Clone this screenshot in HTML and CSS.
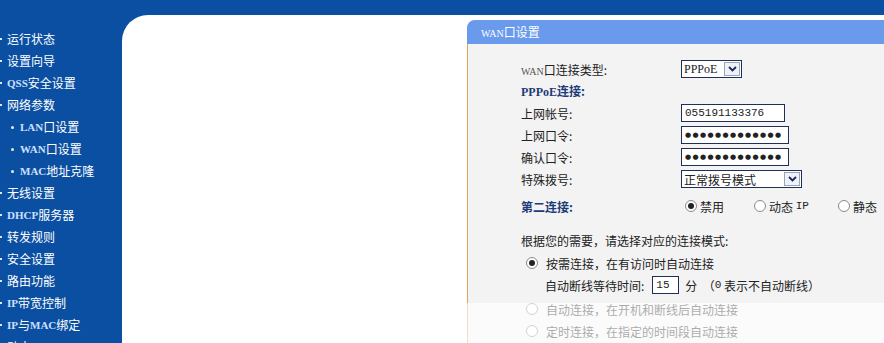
FILE: index.html
```html
<!DOCTYPE html>
<html lang="zh-CN">
<head>
    <meta charset="UTF-8">
    <title>WAN口设置</title>
    <link rel="stylesheet" href="styles.css">
</head>
<body>

    <div class="topbar"></div>

    <div class="layout">
        <!-- menu di sinistra -->
        <ul class="menu">
            <li><span class="dot"></span>运行状态</li>
            <li><span class="dot"></span>设置向导</li>
            <li><span class="dot"></span><span class="en">QSS</span>安全设置</li>
            <li><span class="dot"></span>网络参数</li>
            <li class="sub"><span class="dot"></span><span class="en">LAN</span>口设置</li>
            <li class="sub"><span class="dot"></span><span class="en">WAN</span>口设置</li>
            <li class="sub"><span class="dot"></span><span class="en">MAC</span>地址克隆</li>
            <li><span class="dot"></span>无线设置</li>
            <li><span class="dot"></span><span class="en">DHCP</span>服务器</li>
            <li><span class="dot"></span>转发规则</li>
            <li><span class="dot"></span>安全设置</li>
            <li><span class="dot"></span>路由功能</li>
            <li><span class="dot"></span><span class="en">IP</span>带宽控制</li>
            <li><span class="dot"></span><span class="en">IP</span>与<span class="en">MAC</span>绑定</li>
            <li><span class="dot"></span>动态<span class="en">DNS</span></li>
        </ul>

        <div class="main">
            <div class="panel">
                <div class="panel-title"><span class="en">WAN</span>口设置</div>
                <div class="panel-body">
                    <div class="row">
                        <span class="label"><span class="en gray">WAN</span>口连接类型:</span>
                        <div class="select sel-type">
                            <span class="sel-text">PPPoE</span>
                            <span class="sel-btn"><svg width="9" height="6" viewBox="0 0 9 6"><path d="M1 1 L4.5 4.5 L8 1" fill="none" stroke="#1a2a5a" stroke-width="1.8"/></svg></span>
                        </div>
                    </div>
                    <div class="row">
                        <span class="label strong"><span class="en">PPPoE</span>连接:</span>
                    </div>
                    <div class="row">
                        <span class="label">上网帐号:</span>
                        <div class="field f-user">055191133376</div>
                    </div>
                    <div class="row">
                        <span class="label">上网口令:</span>
                        <div class="field f-pass">●●●●●●●●●●●●●</div>
                    </div>
                    <div class="row">
                        <span class="label">确认口令:</span>
                        <div class="field f-pass">●●●●●●●●●●●●●</div>
                    </div>
                    <div class="row">
                        <span class="label">特殊拨号:</span>
                        <div class="select sel-dial">
                            <span class="sel-text cn">正常拨号模式</span>
                            <span class="sel-btn"><svg width="9" height="6" viewBox="0 0 9 6"><path d="M1 1 L4.5 4.5 L8 1" fill="none" stroke="#1a2a5a" stroke-width="1.8"/></svg></span>
                        </div>
                    </div>
                    <div class="row second">
                        <span class="label strong">第二连接:</span>
                        <div class="radios">
                            <span class="opt"><span class="radio on"></span>禁用</span>
                            <span class="opt"><span class="radio"></span>动态&nbsp;<span class="mono">IP</span></span>
                            <span class="opt"><span class="radio"></span>静态</span>
                        </div>
                    </div>

                    <p class="hint">根据您的需要，请选择对应的连接模式:</p>
                    <div class="mode"><span class="radio on"></span>按需连接，在有访问时自动连接</div>
                    <div class="mode indent">自动断线等待时间: <span class="field f-min">15</span> 分 &nbsp;（<span class="mono">0</span>&nbsp;表示不自动断线）</div>
                    <div class="mode"><span class="radio"></span>自动连接，在开机和断线后自动连接</div>
                    <div class="mode"><span class="radio"></span>定时连接，在指定的时间段自动连接</div>
                </div>
                <div class="fade"></div>
            </div>
        </div>
    </div>

</body>
</html>
```

FILE: styles.css
```css
body {
    margin: 0;
    width: 884px;
    height: 343px;
    overflow: hidden;
    background: #0b4fa2;
    font-family: "Noto Sans CJK SC", sans-serif;
    font-size: 12px;
}
.topbar {
    height: 15px;
    background: #0b4fa2;
}
.layout {
    display: flex;
    height: 328px;
}
.en {
    font-family: "Liberation Serif", serif;
    font-size: 11px;
}
.mono {
    font-family: "Liberation Mono", monospace;
    font-size: 11px;
}

/* menu */
.menu {
    width: 122px;
    flex: none;
    margin: 0;
    padding: 13px 0 0 0;
    list-style: none;
    color: #fff;
}
.menu li {
    height: 22px;
    line-height: 22px;
    display: flex;
    align-items: center;
    white-space: nowrap;
}
.menu .dot {
    width: 2px;
    height: 2px;
    background: #dfe8f5;
    margin: 0 5px 0 0;
}
.menu .sub .dot {
    width: 3px;
    height: 3px;
    border-radius: 50%;
    background: #e0f0e0;
    margin: 0 6px 0 11px;
}
.menu .en {
    color: #cfe0ff;
    font-weight: bold;
    font-size: 11px;
}

/* area principale */
.main {
    flex: 1;
    background: #fff;
    border-top-left-radius: 26px;
    padding: 5px 0 0 345px;
    overflow: hidden;
}
.panel {
    position: relative;
    width: 460px;
    height: 330px;
    background: #f3f3f3;
    border-left: 1px solid #e3a35a;
    border-top-left-radius: 9px;
}
.panel-title {
    height: 24px;
    line-height: 24px;
    background: #6a9aec;
    color: #fff;
    padding-left: 14px;
    border-top-left-radius: 8px;
    margin-left: -1px;
}
.panel-title .en {
    font-size: 10px;
}
.panel-body {
    padding: 14px 0 0 53px;
    color: #222;
}
.row {
    display: flex;
    align-items: center;
    height: 22px;
}
.row.second {
    height: 22px;
    margin-top: 5px;
}
.label {
    width: 160px;
    flex: none;
}
.label .gray {
    color: #555;
    font-size: 10px;
}
.strong {
    font-weight: bold;
    color: #1d3b7a;
}
.strong .en {
    font-size: 12px;
}

/* campi */
.field {
    box-sizing: border-box;
    height: 18px;
    line-height: 16px;
    border: 1px solid #1f2f55;
    background: #fff;
    padding-left: 3px;
    font-family: "Liberation Mono", monospace;
    font-size: 11px;
    color: #222;
}
.f-user {
    width: 104px;
}
.f-pass {
    width: 108px;
    font-family: "DejaVu Sans", sans-serif;
    font-size: 7px;
    letter-spacing: 1.4px;
    padding-left: 3px;
}
.f-min {
    display: inline-block;
    width: 27px;
    vertical-align: middle;
    margin: 0 6px 0 8px;
}
.select {
    box-sizing: border-box;
    height: 18px;
    border: 1px solid #1f2f55;
    background: #fff;
    display: flex;
    align-items: center;
    justify-content: space-between;
}
.sel-type {
    width: 61px;
}
.sel-dial {
    width: 121px;
}
.sel-text {
    padding-left: 2px;
    font-family: "Liberation Serif", serif;
    font-size: 12px;
}
.sel-text.cn {
    font-family: "Noto Sans CJK SC", sans-serif;
    font-size: 12px;
}
.sel-btn {
    width: 16px;
    height: 14px;
    margin-right: 1px;
    border: 1px solid #9aa4b8;
    box-sizing: border-box;
    background: #eef1f6;
    display: flex;
    align-items: center;
    justify-content: center;
}

/* radio */
.radios {
    display: flex;
    padding-left: 4px;
}
.opt {
    display: flex;
    align-items: center;
}
.opt:nth-child(1) { width: 69px; }
.opt:nth-child(2) { width: 84px; }
.radio {
    box-sizing: border-box;
    width: 12px;
    height: 12px;
    border: 1px solid #8a8a8a;
    border-radius: 50%;
    background: #fff;
    margin-right: 3px;
    position: relative;
    display: inline-block;
    flex: none;
}
.radio.on::after {
    content: "";
    position: absolute;
    left: 2px;
    top: 2px;
    width: 6px;
    height: 6px;
    border-radius: 50%;
    background: #222;
}

/* modalita */
.hint {
    margin: 0;
    padding-top: 13px;
    height: 22px;
    line-height: 22px;
}
.mode {
    height: 22px;
    display: flex;
    align-items: center;
    padding-left: 5px;
}
.mode .radio {
    margin-right: 8px;
}
.mode.indent {
    padding-left: 24px;
}
.mode.indent + .mode {
    margin-top: 2px;
}
.fade {
    position: absolute;
    left: -2px;
    right: 0;
    top: 283px;
    bottom: 0;
    background: rgba(255, 255, 255, 0.62);
}
```
